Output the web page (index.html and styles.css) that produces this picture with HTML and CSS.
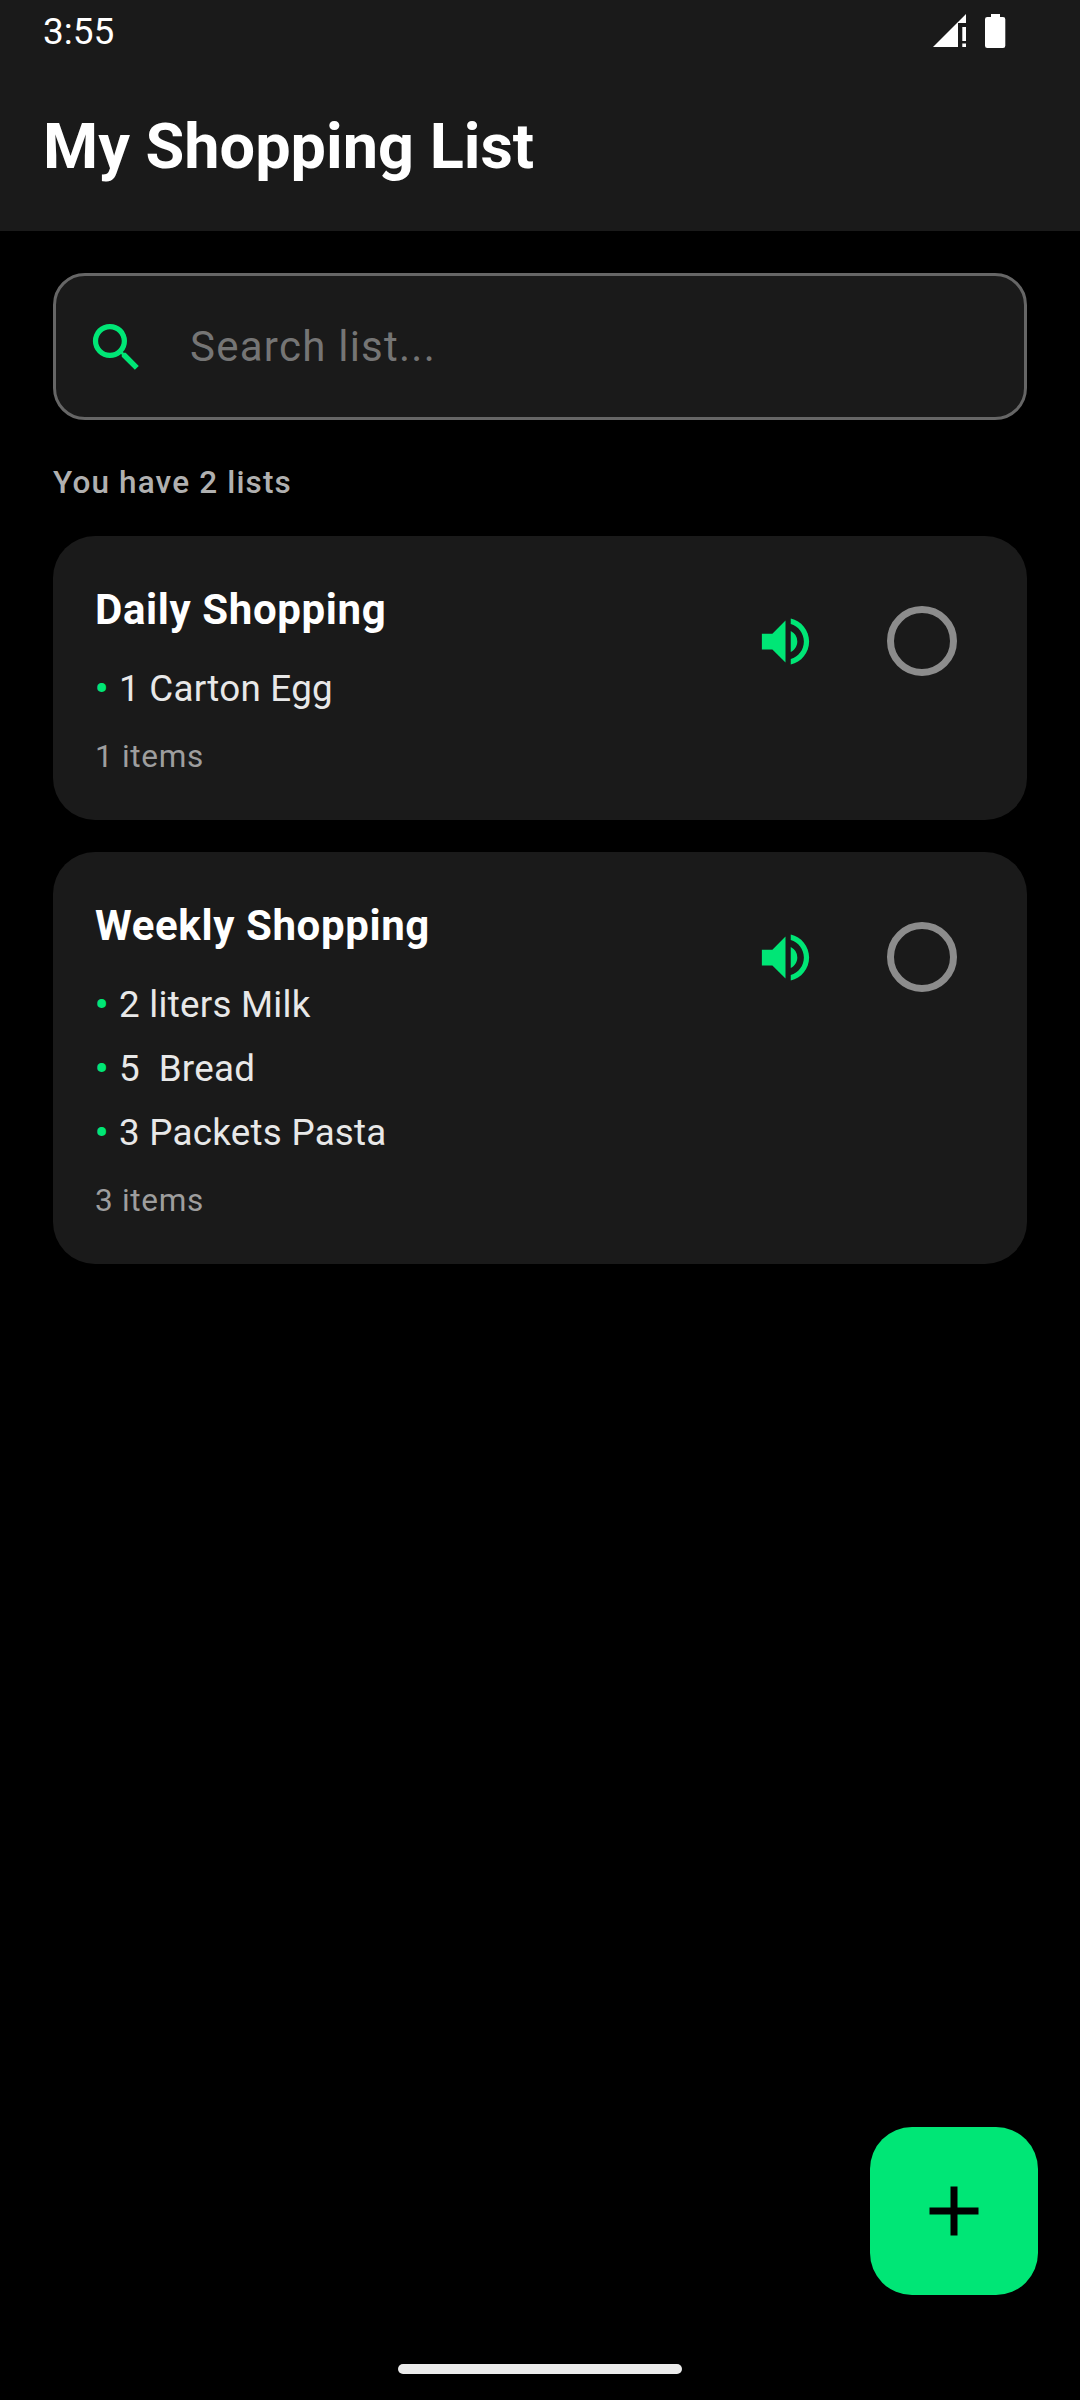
FILE: index.html
```html
<!DOCTYPE html>
<html lang="en">
<head>
<meta charset="utf-8">
<title>My Shopping List</title>
<link rel="stylesheet" href="styles.css">
</head>
<body>
<div class="screen">
  <header class="header">
    <div class="status-bar">
      <span class="clock">3:55</span>
      <svg class="status-icons" width="72" height="34" viewBox="0 0 72 34" fill="#fff">
        <path d="M0 33L25 8V33ZM33 0V9H24Z"/>
        <path d="M29.300 13h3.700v14h-3.700zM29.300 29.500h3.700v3.500h-3.700z"/>
        <path d="M58 0h9v3h3q2.300 0 2.300 2.300V31.700q0 2.300-2.300 2.300H54.300q-2.300 0-2.300-2.300V5.300q0-2.300 2.300-2.300H58z"/>
      </svg>
    </div>
    <h1 class="title">My Shopping List</h1>
  </header>

  <main class="content">
    <div class="search">
      <svg class="icon search-icon" viewBox="0 0 24 24"><path d="M15.500 14h-.79l-.28-.27A6.471 6.471 0 0 0 16 9.500 6.500 6.500 0 1 0 9.500 16c1.610 0 3.090-.59 4.230-1.570l.27.28v.79l5 4.990L20.490 19l-4.990-5zm-6 0C7.010 14 5 11.990 5 9.500S7.010 5 9.500 5 14 7.010 14 9.500 11.990 14 9.500 14z"/></svg>
      <span class="placeholder">Search list...</span>
    </div>
    <p class="summary">You have 2 lists</p>

    <section class="card">
      <div class="card-text">
        <h2 class="card-title">Daily Shopping</h2>
        <ul class="items">
          <li class="item"><span class="bullet">• </span>1 Carton Egg</li>
        </ul>
        <p class="count">1 items</p>
      </div>
      <div class="actions">
        <svg class="icon" viewBox="0 0 24 24"><path d="M3 9v6h4l5 5V4L7 9H3zm13.500 3A4.500 4.500 0 0 0 14 7.970v8.050c1.480-.73 2.500-2.250 2.500-4.020zM14 3.230v2.060c2.890.86 5 3.540 5 6.710s-2.110 5.850-5 6.710v2.060c4.010-.91 7-4.490 7-8.770s-2.990-7.860-7-8.770z"/></svg>
        <span class="radio"></span>
      </div>
    </section>

    <section class="card">
      <div class="card-text">
        <h2 class="card-title">Weekly Shopping</h2>
        <ul class="items">
          <li class="item"><span class="bullet">• </span>2 liters Milk</li>
          <li class="item"><span class="bullet">• </span>5  Bread</li>
          <li class="item"><span class="bullet">• </span>3 Packets Pasta</li>
        </ul>
        <p class="count">3 items</p>
      </div>
      <div class="actions">
        <svg class="icon" viewBox="0 0 24 24"><path d="M3 9v6h4l5 5V4L7 9H3zm13.500 3A4.500 4.500 0 0 0 14 7.970v8.050c1.480-.73 2.500-2.250 2.500-4.020zM14 3.230v2.060c2.890.86 5 3.540 5 6.710s-2.110 5.850-5 6.710v2.060c4.010-.91 7-4.490 7-8.770s-2.990-7.860-7-8.770z"/></svg>
        <span class="radio"></span>
      </div>
    </section>
  </main>

  <footer class="footer">
    <div class="fab">
      <svg width="84" height="84" viewBox="0 0 24 24"><path d="M19 13h-6v6h-2v-6H5v-2h6V5h2v6h6v2z"/></svg>
    </div>
    <div class="nav-pill"></div>
  </footer>
</div>
</body>
</html>
```
FILE: styles.css
```css
* {
  box-sizing: border-box;
}

body,
h1,
h2,
p,
ul {
  margin: 0;
  padding: 0;
}

body {
  background: #000;
  color: #fff;
  font-family: Roboto, "Noto Sans", sans-serif;
}

.screen {
  display: flex;
  flex-direction: column;
  width: 1080px;
  height: 2400px;
  overflow: hidden;
}

.header {
  height: 231px;
  background: #1a1a1a;
}

.status-bar {
  display: flex;
  justify-content: space-between;
  align-items: center;
  height: 63px;
  padding: 0 75px 0 43px;
}

.status-icons {
  overflow: visible;
  margin-top: -1px;
}

.clock {
  font-size: 37px;
  line-height: 63px;
}

.title {
  padding-left: 43px;
  font-size: 63px;
  font-weight: 700;
  line-height: 84px;
  margin-top: 42px;
}

.content {
  display: flex;
  flex-direction: column;
  flex: 1;
  padding: 42px 53px 0;
}

.search {
  display: flex;
  align-items: center;
  gap: 42px;
  height: 147px;
  padding-left: 29px;
  border: 3px solid #666;
  border-radius: 32px;
  background: #1a1a1a;
}

.icon {
  width: 63px;
  height: 63px;
  fill: #00e676;
}

.search-icon {
  margin-top: 2px;
}

.placeholder {
  color: #757575;
  font-size: 42px;
  letter-spacing: 1.250px;
  line-height: 63px;
}

.summary {
  margin: 41px 0 31px;
  color: #b0b0b0;
  font-size: 31.500px;
  font-weight: 500;
  letter-spacing: 1.150px;
  line-height: 44px;
}

.card {
  display: flex;
  justify-content: space-between;
  align-items: flex-start;
  margin-bottom: 32px;
  padding: 42px 63px 42px 42px;
  border-radius: 42px;
  background: #1a1a1a;
}

.card-title {
  font-size: 42px;
  font-weight: 700;
  letter-spacing: 0.620px;
  line-height: 63px;
}

.items {
  padding: 21px 0 6px;
  list-style: none;
}

.item {
  color: #e8e8e8;
  font-size: 36.750px;
  letter-spacing: 0.250px;
  line-height: 53px;
  padding-bottom: 11px;
  white-space: pre;
}

.bullet {
  color: #00e676;
  font-weight: 700;
  letter-spacing: 0.850px;
}

.count {
  color: #9e9e9e;
  font-size: 31.500px;
  letter-spacing: 0.700px;
  line-height: 49px;
  margin-bottom: -3px;
}

.actions {
  display: flex;
  align-items: center;
  gap: 63px;
  margin-top: 21px;
}

.radio {
  width: 70px;
  height: 70px;
  margin: 7px;
  border: 7px solid #8c8c8c;
  border-radius: 50%;
}

.footer {
  display: flex;
  flex-direction: column;
  align-items: center;
  height: 273px;
}

.fab {
  display: flex;
  align-items: center;
  justify-content: center;
  align-self: flex-end;
  width: 168px;
  height: 168px;
  margin-right: 42px;
  border-radius: 42px;
  background: #00e676;
}

.nav-pill {
  width: 284px;
  height: 10px;
  margin-top: 69px;
  border-radius: 5px;
  background: #ebebeb;
}
```
